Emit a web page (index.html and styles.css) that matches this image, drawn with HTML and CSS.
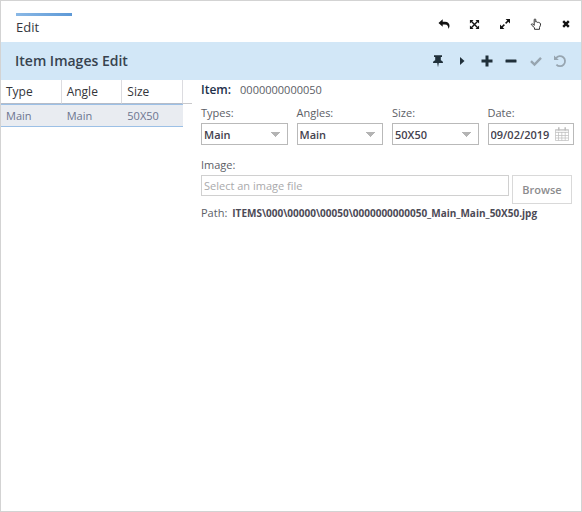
FILE: index.html
```
<!DOCTYPE html>
<html lang="en">
<head>
<meta charset="utf-8">
<title>Item Images Edit</title>
<link rel="stylesheet" href="styles.css">
</head>
<body>
<div class="window">
  <header class="titlebar">
    <h1 class="tab">Edit</h1>
    <div class="window-tools">
      <button type="button" aria-label="Back"><svg width="12" height="12" viewBox="0 0 12 12"><path d="M0.5 5 4.7 1.3V3.7H7C10 3.7 11.5 5.4 11.5 7.7 11.5 9 11 10 10.3 10.8 10.4 8 9.5 6.4 7 6.4H4.7V8.8Z"/></svg></button>
      <button type="button" aria-label="Fit"><svg width="11" height="11" viewBox="0 0 12 12"><path d="M1 1H5L1 5ZM11 1V5L7 1ZM1 11V7L5 11ZM11 11H7L11 7Z"/><path class="line" d="M2.5 2.5 9.5 9.5M9.5 2.5 2.5 9.5"/></svg></button>
      <button type="button" aria-label="Expand"><svg width="12" height="12" viewBox="0 0 12 12"><path d="M11 1V5.4L6.6 1ZM1 11V6.6L5.4 11Z"/><path class="line" d="M9.3 2.7 6.6 5.4M5.4 6.6 2.7 9.3"/></svg></button>
      <button type="button" aria-label="Pointer"><svg width="12" height="12" viewBox="0 0 12 12"><path class="thin" d="M4.2 7.4V1.8C4.2.6 5.8.6 5.8 1.8V4C6.4 3.6 7.2 3.8 7.4 4.4 8.1 4 8.8 4.3 9 4.9 9.8 4.6 10.5 5 10.5 5.9V7.2L9.5 9.4V11.3H4.5V9.7L1.6 7.1C.9 6.2 1.9 5.3 2.8 6Z"/></svg></button>
      <button type="button" aria-label="Close"><svg width="12" height="12" viewBox="0 0 12 12"><path class="cross" d="M3.2 3.2 8.8 8.8M8.8 3.2 3.2 8.8"/></svg></button>
    </div>
  </header>
  <div class="toolbar">
    <h2>Item Images Edit</h2>
    <div class="actions">
      <button type="button" aria-label="Pin"><svg width="14" height="14" viewBox="0 0 14 14"><path d="M3 1.2H11V3H9.8V6.2C11.2 6.6 12 7.5 12 9H7.8L7 13.2 6.2 9H2C2 7.5 2.8 6.6 4.2 6.2V3H3Z"/></svg></button>
      <button type="button" aria-label="Next"><svg width="14" height="14" viewBox="0 0 14 14"><path d="M5 3 9.5 7 5 11Z"/></svg></button>
      <button type="button" aria-label="Add"><svg width="14" height="14" viewBox="0 0 14 14"><path d="M5.5 1.5H8.5V5.5H12.5V8.5H8.5V12.5H5.5V8.5H1.5V5.5H5.5Z"/></svg></button>
      <button type="button" aria-label="Remove"><svg width="14" height="14" viewBox="0 0 14 14"><rect x="1.5" y="5.5" width="11" height="3" rx=".5"/></svg></button>
      <button type="button" aria-label="Save" disabled><svg width="14" height="14" viewBox="0 0 14 14"><path class="stroke" d="M2 7.2 5.5 10.6 12 3.8"/></svg></button>
      <button type="button" aria-label="Undo" disabled><svg width="14" height="14" viewBox="0 0 14 14"><path d="M1 1.5V6H5.8Z"/><path class="arc" d="M3 4.2A5 5 0 1 1 3.4 10.6"/></svg></button>
    </div>
  </div>
  <main class="content">
    <section class="list">
      <table>
        <thead><tr><th>Type</th><th>Angle</th><th>Size</th></tr></thead>
        <tbody><tr><td>Main</td><td>Main</td><td>50X50</td></tr></tbody>
      </table>
    </section>
    <form class="details">
      <p class="item"><b>Item:</b><span>0000000000050</span></p>
      <div class="fields">
        <div class="field">
          <label for="types">Types:</label>
          <select id="types"><option>Main</option></select>
        </div>
        <div class="field">
          <label for="angles">Angles:</label>
          <select id="angles"><option>Main</option></select>
        </div>
        <div class="field">
          <label for="size">Size:</label>
          <select id="size"><option>50X50</option></select>
        </div>
        <div class="field">
          <label for="date">Date:</label>
          <div class="date-box">
            <input id="date" type="text" value="09/02/2019">
            <svg width="14" height="14" viewBox="0 0 14 14"><path class="cal" d="M.5 2.5H13.5V13.5H.5ZM.5 5.5H13.5M.5 8.5H13.5M.5 11H13.5M3.5 5V13.5M6.8 5V13.5M10.2 5V13.5M.5 3.7H13.5"/><path class="ring" d="M3.8.3V3.5M10.2.3V3.5"/></svg>
          </div>
        </div>
      </div>
      <div class="field image">
        <label for="image">Image:</label>
        <div class="picker">
          <input id="image" type="text" placeholder="Select an image file">
          <button type="button">Browse</button>
        </div>
      </div>
      <p class="path"><span>Path:</span><b>ITEMS\000\00000\00050\0000000000050_Main_Main_50X50.jpg</b></p>
    </form>
  </main>
</div>
</body>
</html>
```
FILE: styles.css
```
* {
  box-sizing: border-box;
}

body {
  margin: 0;
  font-family: "Open Sans", sans-serif;
  font-size: 11px;
  color: #5c5e66;
}

h1, h2, p {
  margin: 0;
}

button, input, select {
  font: inherit;
  color: inherit;
  margin: 0;
}

.window {
  min-height: 100vh;
  border: 1px solid #d3d3d3;
  background: #fff;
}

.titlebar {
  display: flex;
  justify-content: space-between;
  height: 41px;
  padding: 12px 5px 0 15px;
}

.tab {
  width: 56px;
  height: 24px;
  border-top: 3px solid;
  border-image: linear-gradient(to right, #8bb9e6, #5c98d6) 1;
  font-size: 13px;
  line-height: 22px;
  font-weight: 400;
  color: #34383e;
}

.window-tools, .actions {
  display: flex;
  justify-content: space-between;
  align-items: center;
}

.window-tools {
  width: 142px;
  height: 22px;
}

.window-tools button, .actions button {
  display: flex;
  align-items: center;
  justify-content: center;
  width: 20px;
  height: 20px;
  padding: 0;
  border: 0;
  background: none;
  fill: #111;
  stroke: none;
}

.line, .thin, .cross, .stroke, .arc, .cal, .ring {
  fill: none;
  stroke: #111;
  stroke-width: 1.5;
}

.thin {
  stroke: #333;
  stroke-width: 1;
}

.cross {
  stroke-width: 2.4;
}

.toolbar {
  display: flex;
  justify-content: space-between;
  align-items: center;
  height: 38px;
  padding: 0 11px 0 14px;
  background: #d2e7f7;
}

.toolbar h2 {
  font-size: 14px;
  line-height: 20px;
  font-weight: 600;
  color: #37434f;
}

.actions {
  width: 142px;
}

.actions button {
  fill: #20303a;
}

.actions button:disabled {
  fill: #97a5b0;
}

.actions .stroke, .actions .arc {
  stroke: #97a5b0;
  stroke-width: 2.4;
}

.actions .arc {
  stroke-width: 1.8;
}

.content {
  display: grid;
  grid-template-columns: 191px 1fr;
}

.list {
  background: linear-gradient(#c9c9cb, #c9c9cb) 0 23px / 100% 1px no-repeat;
}

table {
  width: 182px;
  table-layout: fixed;
  border-collapse: separate;
  border-spacing: 0;
  font-size: 12px;
}

th, td {
  height: 24px;
  padding: 0 0 0 5px;
  text-align: left;
  font-weight: 400;
}

th {
  border-right: 1px solid #dcdce0;
  border-bottom: 1px solid #b5bcc8;
  color: #33353a;
}

td {
  border-top: 1px solid #9cc0e6;
  border-bottom: 1px solid #9cc0e6;
  background: #e9ecf1;
  height: 23px;
  font-size: 11px;
  color: #6c7590;
}

.details {
  padding: 2px 7px 0 9px;
}

.item {
  display: flex;
  align-items: center;
  gap: 9px;
  line-height: 16px;
}

.item b {
  font-size: 12px;
  font-weight: 600;
  color: #22304a;
}

.fields {
  display: grid;
  grid-template-columns: repeat(4, minmax(0, 1fr));
  gap: 9px;
  margin-top: 7px;
}

.field label {
  display: block;
  height: 18px;
  line-height: 16px;
}

select, .date-box {
  display: block;
  width: 100%;
  height: 22px;
  padding: 0 2px;
  border: 1px solid #b9b9b9;
  border-radius: 0;
  background: #fff;
  font-weight: 600;
  color: #44424e;
}

select {
  appearance: none;
  background: conic-gradient(from -45deg at 50% 100%, #b4b4b4 90deg, transparent 0) right 7px center / 9px 5px no-repeat, #fff;
}

.date-box {
  display: flex;
  align-items: center;
  padding-right: 4px;
}

.date-box input {
  flex: 1;
  min-width: 0;
  padding: 0;
  border: 0;
  background: none;
}

.cal, .ring {
  stroke: #bdbdbd;
  stroke-width: .7;
}

.ring {
  stroke-width: 1.5;
}

.image {
  margin-top: 12px;
}

.picker {
  display: flex;
  align-items: flex-start;
  gap: 3px;
  padding-right: 2px;
}

.picker input {
  flex: 1;
  min-width: 0;
  height: 21px;
  padding: 0 2px;
  border: 1px solid #d0d0d0;
}

.picker input::placeholder {
  color: #a9a9ab;
}

.picker button {
  width: 60px;
  height: 29px;
  padding: 0;
  border: 1px solid #d9d9d9;
  background: #fff;
  font-weight: 600;
  color: #8c8c8e;
}

.path {
  display: flex;
  align-items: center;
  gap: 5px;
  margin-top: 1px;
  line-height: 16px;
}

.path b {
  font-size: 10px;
  font-weight: 700;
  color: #4c4a56;
}
```
